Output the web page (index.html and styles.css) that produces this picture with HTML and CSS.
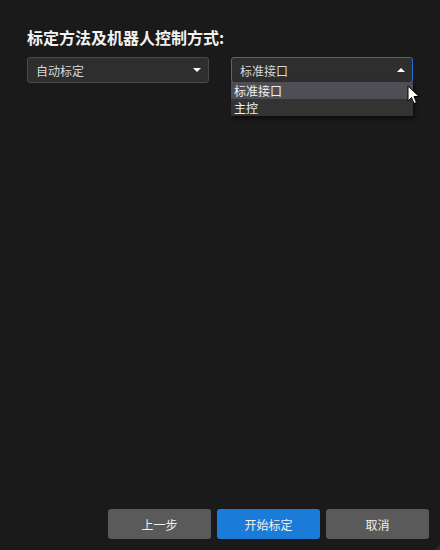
FILE: index.html
```html
<!DOCTYPE html>
<html lang="zh-CN">
<head>
    <meta charset="UTF-8">
    <meta name="viewport" content="width=device-width, initial-scale=1.0">
    <title>标定方法</title>
    <link rel="stylesheet" href="styles.css">
</head>
<body>
    <div class="window">
        <div class="content">
            <h1 class="title">标定方法及机器人控制方式:</h1>
            <div class="row">
                <div class="combo">
                    <span>自动标定</span>
                    <span class="arrow down"></span>
                </div>
                <div class="combo open">
                    <span>标准接口</span>
                    <span class="arrow up"></span>
                    <ul class="list">
                        <li class="item hover">标准接口</li>
                        <li class="item">主控</li>
                    </ul>
                    <svg class="cursor" width="13" height="20" viewBox="0 0 13 20">
                        <path d="M1 1 L1 16 L4.5 12.5 L7 18.5 L9.5 17.5 L7 11.5 L12 11.5 Z" fill="#fff" stroke="#000" stroke-width="1"/>
                    </svg>
                </div>
            </div>
        </div>
        <div class="footer">
            <button class="btn">上一步</button>
            <button class="btn primary">开始标定</button>
            <button class="btn">取消</button>
        </div>
    </div>
</body>
</html>
```

FILE: styles.css
```css
body {
    margin: 0;
    background: #2a2a2a;
    font-family: "Noto Sans CJK SC", "Noto Sans", sans-serif;
}
.window {
    width: 440px;
    height: 550px;
    background: #1a1a1a;
    border-bottom-right-radius: 8px;
    display: flex;
    flex-direction: column;
}
.content {
    flex: 1;
    padding: 24px 27px 0 27px;
}
.title {
    margin: 0 0 7px 0;
    font-size: 16px;
    font-weight: bold;
    color: #f2f2f2;
    line-height: 26px;
}
.row {
    display: flex;
    gap: 22px;
}
.combo {
    position: relative;
    width: 182px;
    height: 26px;
    box-sizing: border-box;
    border: 1px solid #4a4a4a;
    border-radius: 3px;
    background: #2e2e2e;
    color: #d8d8d8;
    font-size: 12px;
    display: flex;
    align-items: center;
    justify-content: space-between;
    padding: 0 7px 0 8px;
}
.combo.open {
    border-color: #1f6fd0;
}
.arrow {
    width: 0;
    height: 0;
    border-left: 4.5px solid transparent;
    border-right: 4.5px solid transparent;
}
.arrow.down {
    border-top: 4.5px solid #fff;
}
.arrow.up {
    border-bottom: 4.5px solid #fff;
}
.list {
    position: absolute;
    left: -1px;
    top: 24px;
    width: 182px;
    margin: 0;
    padding: 0;
    list-style: none;
    background: #333333;
    box-shadow: 2px 3px 4px rgba(0, 0, 0, 0.5);
}
.item {
    height: 17px;
    line-height: 17px;
    padding-left: 3px;
    font-size: 12px;
    color: #f0f0f0;
}
.item.hover {
    background: #4e4e54;
}
.cursor {
    position: absolute;
    left: 175px;
    top: 27px;
}
.footer {
    display: flex;
    justify-content: flex-end;
    gap: 6px;
    padding: 0 11px 11px 0;
}
.btn {
    width: 103px;
    height: 30px;
    border: none;
    border-radius: 3px;
    background: #5a5a5a;
    color: #f0f0f0;
    font-family: inherit;
    font-size: 12px;
}
.btn.primary {
    background: #1a7bd9;
}
```
